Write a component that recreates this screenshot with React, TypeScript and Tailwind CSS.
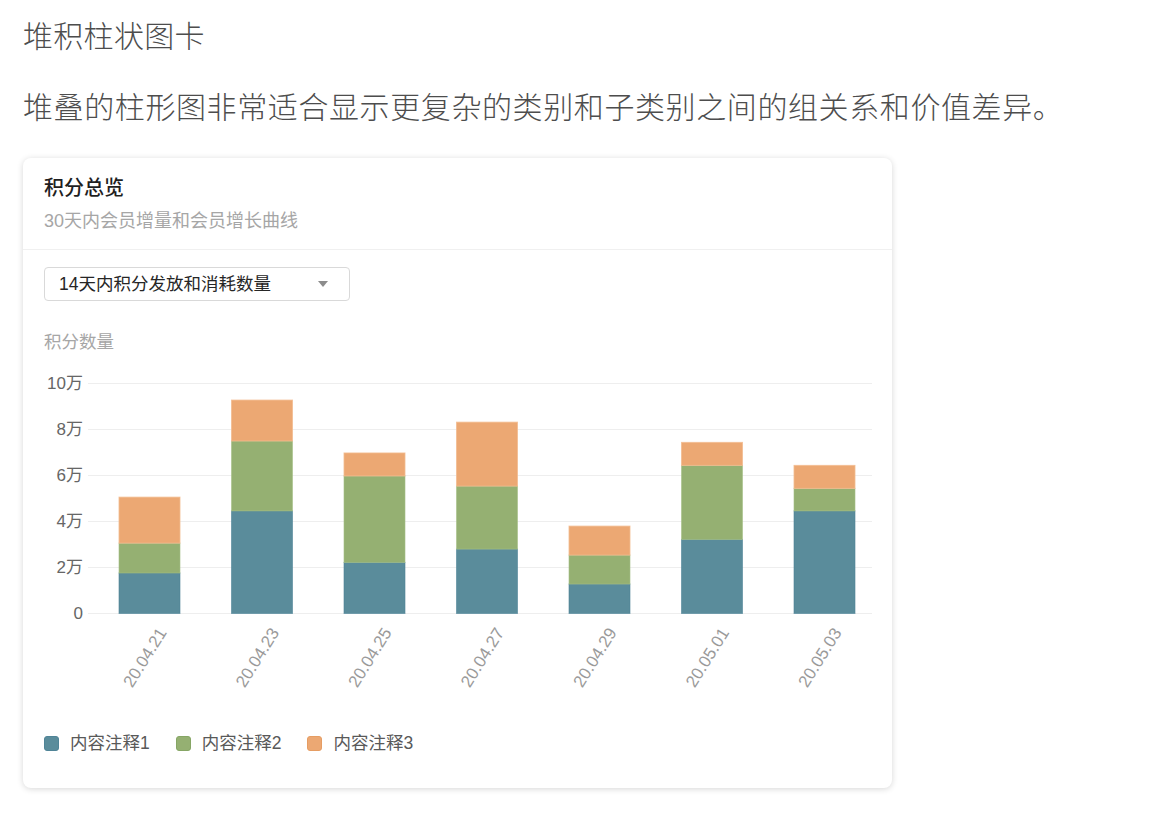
import React from "react";

const FONT = '"Liberation Sans", "Noto Sans CJK SC", sans-serif';

const COLORS = {
  blue: "#5a8c9b",
  green: "#95b072",
  orange: "#eca873",
};

const data = [
  { label: "20.04.21", b: 1.76, g: 1.3, o: 2.0 },
  { label: "20.04.23", b: 4.46, g: 3.04, o: 1.78 },
  { label: "20.04.25", b: 2.22, g: 3.76, o: 1.0 },
  { label: "20.04.27", b: 2.8, g: 2.74, o: 2.78 },
  { label: "20.04.29", b: 1.28, g: 1.26, o: 1.26 },
  { label: "20.05.01", b: 3.22, g: 3.22, o: 1.0 },
  { label: "20.05.03", b: 4.46, g: 0.98, o: 1.0 },
];

function Chart() {
  const base = 261.5;
  const unit = 23; // px per 1万
  const ticks = [0, 2, 4, 6, 8, 10];
  const barW = 61;
  return (
    <svg width={869} height={360} className="block" style={{ fontFamily: FONT }}>
      {ticks.map((t) => {
        const y = base - t * unit;
        return (
          <g key={t}>
            <line x1={65} x2={849} y1={y} y2={y} stroke="#eeeeee" strokeWidth={1} />
            <text x={60} y={y + 1} textAnchor="end" dominantBaseline="middle" fontSize={17} fill="#666666">
              {t === 0 ? "0" : `${t}万`}
            </text>
          </g>
        );
      })}
      {data.map((d, i) => {
        const cx = 126.5 + i * 112.5;
        const x = cx - barW / 2;
        const hb = d.b * unit;
        const hg = d.g * unit;
        const ho = d.o * unit;
        const yb = base - hb;
        const yg = yb - hg;
        const yo = yg - ho;
        const ax = cx + 14;
        const ay = 278;
        return (
          <g key={d.label}>
            <rect x={x} y={yb} width={barW} height={hb} fill={COLORS.blue} stroke="#4f8497" strokeOpacity={0.6} strokeWidth={1} />
            <rect x={x} y={yg} width={barW} height={hg} fill={COLORS.green} stroke="#a5bf86" strokeOpacity={0.6} strokeWidth={1} />
            <rect x={x} y={yo} width={barW} height={ho} fill={COLORS.orange} stroke="#f2bb90" strokeOpacity={0.8} strokeWidth={1} />
            <text
              x={ax}
              y={ay}
              textAnchor="end"
              dominantBaseline="middle"
              fontSize={17}
              fill="#9a9a9a"
              transform={`rotate(-58 ${ax} ${ay})`}
            >
              {d.label}
            </text>
          </g>
        );
      })}
    </svg>
  );
}

function LegendItem({ color, border, text }: { color: string; border: string; text: string }) {
  return (
    <div className="flex items-center">
      <span className="w-[15px] h-[15px] rounded-[3px] border" style={{ backgroundColor: color, borderColor: border }} />
      <span className="ml-[11px] text-[17.5px] leading-[22px] text-[#595959]">{text}</span>
    </div>
  );
}

export default function App() {
  return (
    <div className="min-h-screen bg-white pl-[23px] pt-[16px]" style={{ fontFamily: FONT }}>
      <h1 className="text-[30px] leading-[42px] font-light tracking-[0.3px] text-[#4d4d4d]">堆积柱状图卡</h1>
      <p className="mt-[29px] text-[30px] leading-[42px] font-light tracking-[0.6px] text-[#4d4d4d]">
        堆叠的柱形图非常适合显示更复杂的类别和子类别之间的组关系和价值差异。
      </p>
      <div className="mt-[29px] w-[869px] rounded-lg bg-white shadow-[0_1px_6px_rgba(0,0,0,0.16)]">
        <div className="px-[21px] pt-[18px] pb-[17px] border-b border-[#f0f0f0]">
          <div className="text-[20px] leading-[24px] font-medium text-[#1f1f1f]">积分总览</div>
          <div className="mt-[10px] text-[18px] leading-[22px] text-[#a6a6a6]">30天内会员增量和会员增长曲线</div>
        </div>
        <div className="pt-[17px] pb-[34px]">
          <div className="mx-[21px] w-[306px] h-[34px] border border-[#d9d9d9] rounded-[4px] flex items-center justify-between pl-[14px] pr-[21px]">
            <span className="text-[17.5px] leading-[22px] text-[#262626]">14天内积分发放和消耗数量</span>
            <svg width="10" height="6" viewBox="0 0 10 6">
              <path d="M0 0 L10 0 L5 6 Z" fill="#8c8c8c" />
            </svg>
          </div>
          <div className="mx-[21px] mt-[31px] text-[17.5px] leading-[20px] text-[#a6a6a6]">积分数量</div>
          <Chart />
          <div className="mx-[21px] mt-[20px] flex items-center gap-[26px]">
            <LegendItem color={COLORS.blue} border="#4f8497" text="内容注释1" />
            <LegendItem color={COLORS.green} border="#86a665" text="内容注释2" />
            <LegendItem color={COLORS.orange} border="#e69d63" text="内容注释3" />
          </div>
        </div>
      </div>
    </div>
  );
}
